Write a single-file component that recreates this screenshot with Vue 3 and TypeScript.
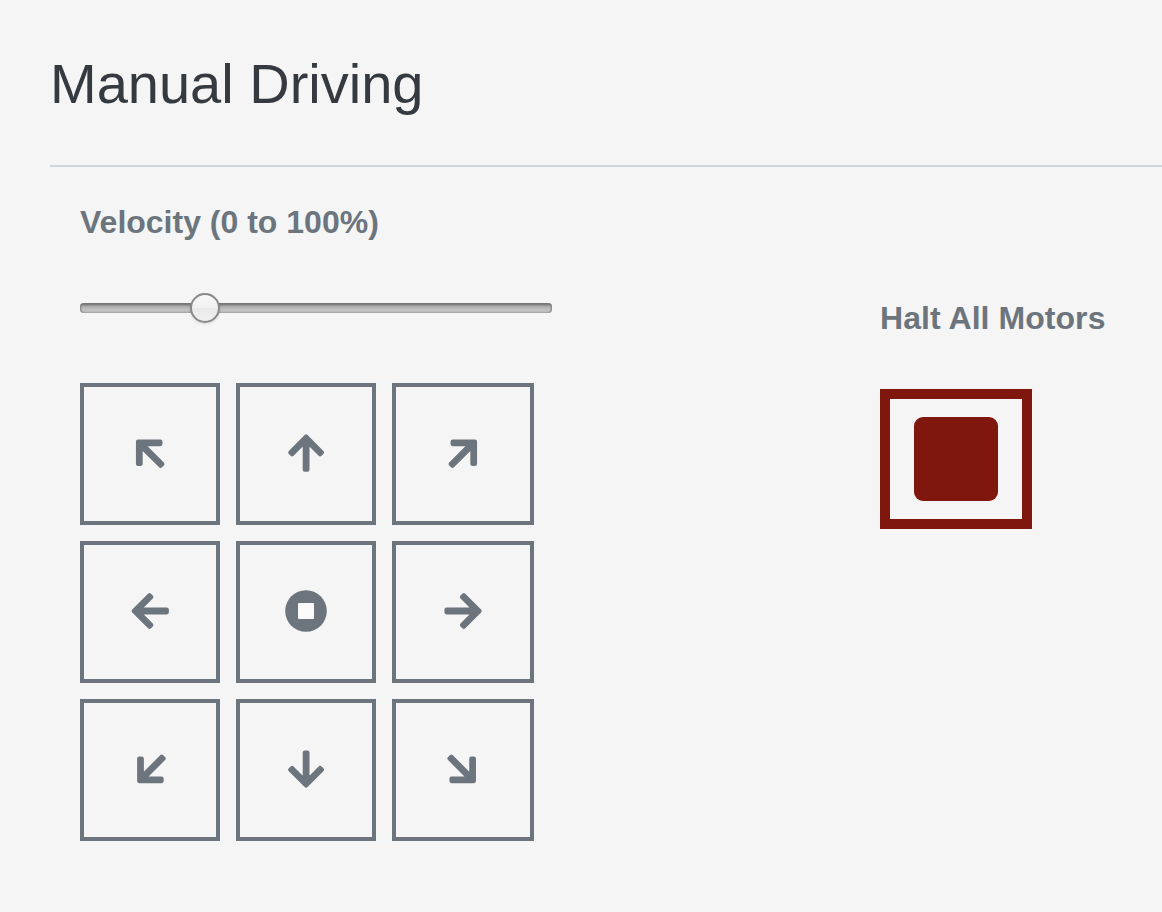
<script setup lang="ts">
import { ref } from 'vue'

interface Direction {
  name: string
  angle: number
  dx: number
  dy: number
}

const velocity = ref(24.9)

const directions: (Direction | null)[] = [
  { name: 'Forward left', angle: -45, dx: -0.3, dy: -0.8 },
  { name: 'Forward', angle: 0, dx: 0.1, dy: -0.9 },
  { name: 'Forward right', angle: 45, dx: 0.3, dy: -0.8 },
  { name: 'Left', angle: -90, dx: 0.2, dy: -1 },
  null,
  { name: 'Right', angle: 90, dx: 0.1, dy: -1 },
  { name: 'Back left', angle: -135, dx: 0.9, dy: -0.6 },
  { name: 'Back', angle: 180, dx: 0.1, dy: -0.9 },
  { name: 'Back right', angle: 135, dx: -0.8, dy: -0.6 },
]
</script>

<template>
  <main class="page">
    <header class="header">
      <h1 class="title">Manual Driving</h1>
    </header>
    <div class="panels">
      <section class="drive">
        <div class="label velocity-label"><span>Velocity (0 to 100%)</span></div>
        <input v-model="velocity" class="slider" type="range" min="0" max="100" step="0.1" aria-label="Velocity" />
        <div class="pad">
          <button v-for="(d, i) in directions" :key="i" class="pad-button" :aria-label="d ? d.name : 'Stop'">
            <svg class="icon" viewBox="-24 -24 48 48">
              <path
                v-if="d"
                class="arrow"
                :transform="`translate(${d.dx} ${d.dy}) rotate(${d.angle}) translate(0 -14.7)`"
                d="M0 -1.8L15.8 14L14 15.8L1.3 3.1V31.3H-1.3V3.1L-14 15.8L-15.8 14Z"
              />
              <template v-else>
                <circle class="disc" cx="0" cy="-1" r="20.8" />
                <rect class="hole" x="-8" y="-9" width="16" height="16" rx="1" />
              </template>
            </svg>
          </button>
        </div>
      </section>
      <section class="halt">
        <div class="label halt-label"><span>Halt All Motors</span></div>
        <button class="halt-button" aria-label="Halt all motors"><span class="halt-mark"></span></button>
      </section>
    </div>
  </main>
</template>

<style>
body {
  background: #f5f5f5;
  overflow: hidden;
}
</style>

<style scoped>
.page {
  box-sizing: border-box;
  height: 912px;
  padding-left: 50px;
  overflow: hidden;
  background: #f5f5f5;
  font-family: Helvetica, "Liberation Sans", Arial, sans-serif;
}
.header {
  box-sizing: border-box;
  height: 167px;
  padding-top: 50px;
  border-bottom: 2px solid #ced4da;
}
.title {
  margin: 0;
  color: #343a40;
  font-size: 56px;
  font-weight: 400;
  line-height: 67px;
}
.panels {
  display: grid;
  grid-template-columns: 800px 1fr;
  padding-left: 30px;
}
.label {
  color: #6c757d;
  font-size: 32px;
  font-weight: 700;
  line-height: 38px;
  white-space: nowrap;
}
.velocity-label {
  padding-top: 36px;
}
.slider {
  display: block;
  box-sizing: border-box;
  width: 472px;
  height: 30px;
  margin: 52px 0 60px;
  appearance: none;
  background: transparent;
}
.slider::-webkit-slider-runnable-track {
  height: 10px;
  border-radius: 4px;
  background: linear-gradient(#707070 0%, #7e7e7e 15%, #ababab 35%, #bdbdbd 55%, #c4c4c4 78%, #a5a5a5 100%);
  box-shadow: inset 2px 0 2px -1px #808080, inset -2px 0 2px -1px #808080;
}
.slider::-webkit-slider-thumb {
  appearance: none;
  box-sizing: border-box;
  width: 30px;
  height: 30px;
  margin-top: -10px;
  border: 2px solid #888;
  border-radius: 50%;
  background: linear-gradient(#f8f8f8 0%, #f0f0f0 50%, #e9e9e9 51%, #f0f0f0 100%);
  box-shadow: 0 1px 3px rgba(0, 0, 0, 0.12);
}
.pad {
  display: grid;
  grid-template-columns: 140px 140px 142px;
  grid-auto-rows: 142px;
  gap: 16px;
}
.pad-button {
  display: grid;
  place-items: center;
  padding: 0;
  border: 4px solid #6c757d;
  background: transparent;
}
.icon {
  display: block;
  width: 48px;
  height: 48px;
}
.arrow {
  fill: #6c757d;
  stroke: #6c757d;
  stroke-width: 4.2;
  stroke-linejoin: round;
}
.disc {
  fill: #6c757d;
}
.hole {
  fill: #fafafa;
}
.halt-label {
  padding-top: 132px;
  letter-spacing: 0.06px;
}
.halt-button {
  display: grid;
  place-items: center;
  box-sizing: border-box;
  width: 152px;
  height: 140px;
  margin-top: 52px;
  padding: 0;
  border: 10px solid #7f170e;
  background: transparent;
}
.halt-mark {
  width: 84px;
  height: 84px;
  border-radius: 9px;
  background: #7f170e;
}
</style>
